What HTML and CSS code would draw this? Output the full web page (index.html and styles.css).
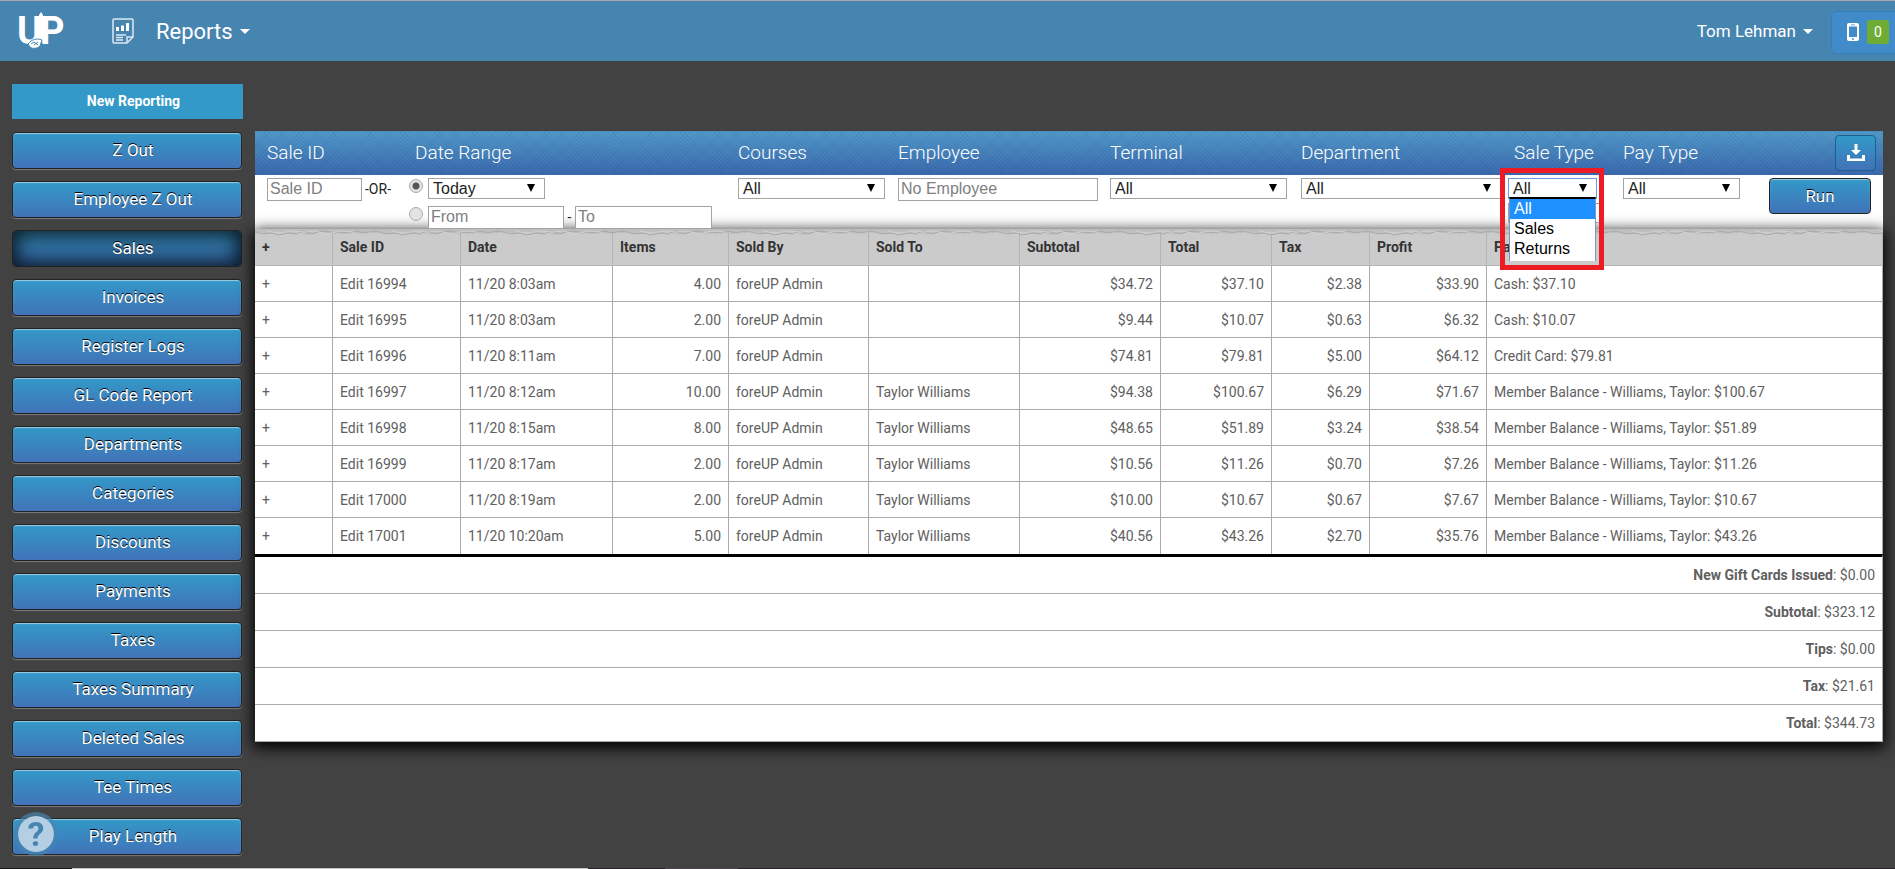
FILE: index.html
```html
<!DOCTYPE html>
<html lang="en">
<head>
<meta charset="utf-8">
<title>Reports</title>
<link rel="stylesheet" href="styles.css">
</head>
<body>
<header class="topbar">
  <a class="logo" href="#" aria-label="UP home">
    <svg width="50" height="52" viewBox="0 -6 50 52" fill="#fff">
      <text class="logo-text" x="1" y="33">U</text>
      <text class="logo-text" x="24" y="33">P</text>
      <path d="M23 4l2-3 2 3v27h-4z"/>
      <path d="M12 33c4-5 9-6 14-4l-2 6c-3 3-8 3-10 1z" stroke="#4785b1"/>
      <path d="M15 33l3-2 4 3M18 34l4-3" stroke="#4785b1" fill="none"/>
    </svg>
  </a>
  <button class="module" type="button">
    <svg width="22" height="26" viewBox="0 0 22 26" fill="none" stroke="#dbe8f1">
      <path d="M2 1h18q1 0 1 1v17l-6 6H2q-1 0-1-1V2q0-1 1-1z" stroke-width="1.500"/>
      <path d="M21 19h-6v6" stroke-width="1.500"/>
      <path d="M5.500 13V9M10.500 13V7.500M15.500 13V5" stroke="#fff" stroke-width="3"/>
      <path d="M4 17h10M4 19.500h7M4 22h7" stroke-width="1.300"/>
    </svg>
    <span>Reports</span><i class="caret"></i>
  </button>
  <button class="user" type="button">Tom Lehman<i class="caret"></i></button>
  <button class="phone" type="button" aria-label="Messages">
    <svg width="12" height="18" viewBox="0 0 12 18"><rect width="12" height="18" rx="2" fill="#fff"/><path d="M2 3.500h8v10.500H2zM4 1.500h4v.7H4z" fill="#428bca"/><circle cx="6" cy="16" r="1" fill="#428bca"/></svg>
    <span class="badge">0</span>
  </button>
</header>
<div class="page">
  <nav class="sidebar">
    <a class="new" href="#">New Reporting</a>
    <a class="item" href="#">Z Out</a>
    <a class="item" href="#">Employee Z Out</a>
    <a class="item active" href="#">Sales</a>
    <a class="item" href="#">Invoices</a>
    <a class="item" href="#">Register Logs</a>
    <a class="item" href="#">GL Code Report</a>
    <a class="item" href="#">Departments</a>
    <a class="item" href="#">Categories</a>
    <a class="item" href="#">Discounts</a>
    <a class="item" href="#">Payments</a>
    <a class="item" href="#">Taxes</a>
    <a class="item" href="#">Taxes Summary</a>
    <a class="item" href="#">Deleted Sales</a>
    <a class="item" href="#">Tee Times</a>
    <a class="item" href="#">Play Length</a>
  </nav>
  <main class="main">
    <div class="cols titles">
      <label for="sale">Sale ID</label>
      <label for="range">Date Range</label>
      <label for="course">Courses</label>
      <label for="emp">Employee</label>
      <label for="term">Terminal</label>
      <label for="dept">Department</label>
      <label class="type-title" for="type">Sale Type</label>
      <label for="pay">Pay Type</label>
      <button class="download" type="button" aria-label="Download">
        <svg width="18" height="18" viewBox="0 0 18 18" fill="#fff"><path d="M7.500 0h3v6H14l-5 5-5-5h3.500zM0 11h3v3.500h12V11h3v6H0z"/></svg>
      </button>
    </div>
    <form class="cols filters">
      <div class="field sale"><input class="box" id="sale" type="text" placeholder="Sale ID"><span>-OR-</span></div>
      <div class="dates">
        <div class="field"><input class="radio" type="radio" name="mode" aria-label="Preset range" checked><span class="pick range"><select id="range"><option>Today</option></select></span></div>
        <div class="field"><input class="radio" type="radio" name="mode" aria-label="Custom range"><input class="box date" type="text" placeholder="From" aria-label="From"><span class="dash">-</span><input class="box date" type="text" placeholder="To" aria-label="To"></div>
      </div>
      <span class="pick course"><select id="course"><option>All</option></select></span>
      <input class="box emp" id="emp" type="text" placeholder="No Employee">
      <span class="pick term"><select id="term"><option>All</option></select></span>
      <span class="pick dept"><select id="dept"><option>All</option></select></span>
      <div class="type">
        <span class="pick open"><select id="type"><option>All</option><option>Sales</option><option>Returns</option></select></span>
        <input class="box extra" type="text" aria-label="Sale type value">
        <ul class="menu"><li class="on">All</li><li>Sales</li><li>Returns</li></ul>
        <div class="mark"></div>
      </div>
      <span class="pick pay"><select id="pay"><option>All</option></select></span>
      <button class="run" type="button">Run</button>
    </form>
    <section class="report">
      <table>
        <colgroup><col class="c1"><col class="c2"><col class="c3"><col class="c4"><col class="c5"><col class="c6"><col class="c7"><col class="c8"><col class="c9"><col class="c10"><col></colgroup>
        <thead><tr><th>+</th><th>Sale ID</th><th>Date</th><th>Items</th><th>Sold By</th><th>Sold To</th><th>Subtotal</th><th>Total</th><th>Tax</th><th>Profit</th><th>Payments</th></tr></thead>
        <tbody>
          <tr><td>+</td><td>Edit 16994</td><td>11/20 8:03am</td><td class="n">4.00</td><td>foreUP Admin</td><td></td><td class="n">$34.72</td><td class="n">$37.10</td><td class="n">$2.38</td><td class="n">$33.90</td><td>Cash: $37.10</td></tr>
          <tr><td>+</td><td>Edit 16995</td><td>11/20 8:03am</td><td class="n">2.00</td><td>foreUP Admin</td><td></td><td class="n">$9.44</td><td class="n">$10.07</td><td class="n">$0.63</td><td class="n">$6.32</td><td>Cash: $10.07</td></tr>
          <tr><td>+</td><td>Edit 16996</td><td>11/20 8:11am</td><td class="n">7.00</td><td>foreUP Admin</td><td></td><td class="n">$74.81</td><td class="n">$79.81</td><td class="n">$5.00</td><td class="n">$64.12</td><td>Credit Card: $79.81</td></tr>
          <tr><td>+</td><td>Edit 16997</td><td>11/20 8:12am</td><td class="n">10.00</td><td>foreUP Admin</td><td>Taylor Williams</td><td class="n">$94.38</td><td class="n">$100.67</td><td class="n">$6.29</td><td class="n">$71.67</td><td>Member Balance - Williams, Taylor: $100.67</td></tr>
          <tr><td>+</td><td>Edit 16998</td><td>11/20 8:15am</td><td class="n">8.00</td><td>foreUP Admin</td><td>Taylor Williams</td><td class="n">$48.65</td><td class="n">$51.89</td><td class="n">$3.24</td><td class="n">$38.54</td><td>Member Balance - Williams, Taylor: $51.89</td></tr>
          <tr><td>+</td><td>Edit 16999</td><td>11/20 8:17am</td><td class="n">2.00</td><td>foreUP Admin</td><td>Taylor Williams</td><td class="n">$10.56</td><td class="n">$11.26</td><td class="n">$0.70</td><td class="n">$7.26</td><td>Member Balance - Williams, Taylor: $11.26</td></tr>
          <tr><td>+</td><td>Edit 17000</td><td>11/20 8:19am</td><td class="n">2.00</td><td>foreUP Admin</td><td>Taylor Williams</td><td class="n">$10.00</td><td class="n">$10.67</td><td class="n">$0.67</td><td class="n">$7.67</td><td>Member Balance - Williams, Taylor: $10.67</td></tr>
          <tr><td>+</td><td>Edit 17001</td><td>11/20 10:20am</td><td class="n">5.00</td><td>foreUP Admin</td><td>Taylor Williams</td><td class="n">$40.56</td><td class="n">$43.26</td><td class="n">$2.70</td><td class="n">$35.76</td><td>Member Balance - Williams, Taylor: $43.26</td></tr>
        </tbody>
        <tfoot>
          <tr><td colspan="11"><b>New Gift Cards Issued</b>: $0.00</td></tr>
          <tr><td colspan="11"><b>Subtotal</b>: $323.12</td></tr>
          <tr><td colspan="11"><b>Tips</b>: $0.00</td></tr>
          <tr><td colspan="11"><b>Tax</b>: $21.61</td></tr>
          <tr><td colspan="11"><b>Total</b>: $344.73</td></tr>
        </tfoot>
      </table>
      <svg class="torn" width="100%" height="8" aria-hidden="true">
        <defs><pattern id="tear" width="124" height="8" patternUnits="userSpaceOnUse">
          <path d="M0 0h124v3l-6 1-5-1-8 2-9-2-7 2-8-1-6 1-9-2-8 1-6 2-9-3-7 1-8 1-9-2-8 2-7-2-8 1z" fill="#bebebe"/>
          <path d="M0 3l8 2 9-1 7 2 9-2 8 1 7-3 9 3 6-2 8-1 9 2 6-1 8 1 7-2 9 2 8-2 6 1" fill="none" stroke="#a8a8a8"/>
          <path d="M12 2l12 2 14-2 12 1 10-1 12 3 14-3 12 1" fill="none" stroke="#d0d0d0"/>
        </pattern></defs>
        <rect width="100%" height="8" fill="url(#tear)"/>
      </svg>
    </section>
  </main>
</div>
<button class="help" type="button" aria-label="Help">?</button>
<div class="edge"></div>
</body>
</html>
```
FILE: styles.css
```css
* { box-sizing: border-box; }
body {
  margin: 0;
  height: 100vh;
  overflow: hidden;
  background: #424242;
  color: #606060;
  font: 14px/20px Roboto, sans-serif;
}
a { color: inherit; text-decoration: none; }
button { font-family: inherit; cursor: pointer; }

.topbar {
  display: flex;
  align-items: center;
  height: 61px;
  border-top: 1px solid #a8a8a8;
  background: #4785b1;
  color: #fff;
}
.logo { display: flex; margin-left: 16px; }
.logo-text { font: 700 38px Roboto, sans-serif; }
.module, .user {
  display: flex;
  align-items: center;
  padding: 0;
  border: 0;
  background: none;
  color: #fff;
}
.module { margin-left: 46px; font-size: 22px; }
.module svg { margin-right: 22px; }
.caret {
  margin-left: 7px;
  border: 5px solid transparent;
  border-top-color: #fff;
  border-bottom: 0;
}
.user { margin-left: auto; font-size: 17px; }
.phone {
  display: flex;
  align-items: center;
  gap: 8px;
  height: 43px;
  margin: 2px -7px 0 18px;
  padding: 0 12px 0 15px;
  border: 1px solid #357ebd;
  border-radius: 5px;
  background: #428bca;
  color: #fff;
}
.badge {
  width: 22px;
  border-radius: 3px;
  background: #6fac34;
  font-size: 14px;
  line-height: 24px;
}

.page { display: flex; gap: 12px; padding: 23px 12px 0; }
.sidebar {
  display: flex;
  flex: 0 0 231px;
  flex-direction: column;
  gap: 12px;
}
.new, .item {
  display: block;
  padding-left: 12px;
  color: #fff;
  text-align: center;
}
.new { margin-bottom: 1px; background: #3399c8; font-weight: 700; line-height: 35px; }
.item, .run {
  border: 1px solid #222;
  border-radius: 4px;
  background: linear-gradient(#3399c8, #4173b8);
  box-shadow: inset 0 1px 1px rgba(255,255,255,.5), 0 1px 1px rgba(255,255,255,.3);
  color: #fff;
  font-size: 17px;
  line-height: 35px;
  text-shadow: 0 -1px 0 #000;
}
.item { margin-right: 1px; }
.item.active { box-shadow: inset 0 0 18px 5px rgba(0,0,0,.75); background: linear-gradient(#3080aa, #3468a8); }

.main { flex: 1; min-width: 0; padding-top: 47px; }
.cols {
  display: grid;
  grid-template-columns: 148fr 323fr 160fr 212fr 191fr 207fr 115fr 146fr 114fr;
  padding-left: 12px;
}
.titles {
  align-items: center;
  height: 44px;
  background:
    repeating-linear-gradient(45deg, rgba(20,60,120,.08) 0 1px, transparent 1px 3px),
    repeating-linear-gradient(-45deg, rgba(20,60,120,.08) 0 1px, transparent 1px 3px),
    linear-gradient(#529bca, #3b69ad);
  box-shadow: inset 0 1px #4b8cbc;
  color: #fff;
  font-size: 19px;
  font-weight: 300;
}
.titles label { line-height: 42px; }
.type-title { padding-left: 6px; }
.download {
  display: grid;
  place-items: center;
  width: 41px;
  height: 36px;
  margin: 0 7px 0 auto;
  padding: 0;
  border: 1px solid #1c5f93;
  border-radius: 4px;
  background: linear-gradient(#3399c8, #4173b8);
}
.filters {
  align-items: start;
  height: 54px;
  padding-top: 3px;
  background: #fff;
  color: #222;
}
.filters > * { position: relative; z-index: 2; }
.field { display: flex; align-items: flex-start; }
.box, .pick select {
  height: 23px;
  padding: 0 2px 2px;
  border: 1px solid #a3a3a3;
  border-radius: 0;
  background: #fff;
  color: #222;
  font: 16px/19px "Liberation Sans", Arial, sans-serif;
}
.box::placeholder { color: #808080; opacity: 1; }
.sale .box { width: 95px; margin-right: 3px; }
.sale span { line-height: 22px; }
.dates { display: grid; gap: 7px; }
.radio {
  appearance: none;
  width: 14px;
  height: 14px;
  margin: 1px 5px 0 -6px;
  border: 1px solid #aaa;
  border-radius: 50%;
  background: #e3e3e3;
}
.radio:checked { background: radial-gradient(#555 0 3px, #e3e3e3 4px); }
.date { width: 136px; }
.date:last-child { width: 137px; }
.dash { width: 11px; line-height: 23px; text-align: center; }
.pick { position: relative; display: block; }
.pick select { display: block; appearance: none; width: 100%; height: 21px; padding: 0 4px; }
.pick::after {
  position: absolute;
  top: 6px;
  right: 10px;
  width: 8px;
  height: 8px;
  background: #000;
  clip-path: polygon(0 0, 100% 0, 50% 100%);
  content: "";
}
.range { width: 117px; }
.course { width: 147px; }
.emp { width: 200px; }
.term { width: 177px; }
.dept { width: 200px; }
.pay { width: 117px; }
.filters .type { z-index: 3; width: 89px; }
.open select { border: 1px solid #6a96dc; }
.extra { display: block; width: 92px; height: 20px; margin-top: 4px; }
.menu {
  position: absolute;
  top: 19px;
  left: 1px;
  width: 87px;
  height: 64px;
  margin: 0;
  padding: 0;
  border: 1px solid #7795c8;
  border-top: 2px solid #000;
  border-bottom: 0;
  background: #fff;
  color: #000;
  font: 16px/20px "Liberation Sans", Arial, sans-serif;
  list-style: none;
}
.menu li { padding-left: 4px; }
.menu .on { background: #1e90ff; color: #fff; }
.mark {
  position: absolute;
  top: -10px;
  left: -8px;
  width: 104px;
  height: 102px;
  border: 5px solid #ed1c24;
  pointer-events: none;
}
.run { width: 102px; height: 36px; padding: 0; line-height: 32px; }

.report { position: relative; z-index: 1; box-shadow: 0 4px 14px 2px #000; }
table {
  width: 100%;
  border-collapse: separate;
  border-spacing: 0;
  table-layout: fixed;
  background: #fff;
}
.c1 { width: 78px; } .c2 { width: 128px; } .c3 { width: 152px; }
.c4 { width: 116px; } .c5 { width: 140px; } .c6 { width: 151px; }
.c7 { width: 141px; } .c8 { width: 111px; } .c9 { width: 98px; }
.c10 { width: 117px; }
th, td {
  height: 36px;
  padding: 0 7px;
  border: solid #ababab;
  border-width: 0 1px 1px 0;
  text-align: left;
  white-space: nowrap;
}
th { height: 37px; background: #cbcbcb; border-color: #b4b4b4; color: #333; font-weight: 700; }
.n { text-align: right; }
tbody tr:last-child td { border-bottom: 0; }
tfoot td { height: 37px; text-align: right; }
tfoot tr:first-child td { height: 40px; border-top: 3px solid #000; }
.torn { position: absolute; top: 0; left: 0; display: block; }

.help {
  position: fixed;
  bottom: 13px;
  left: 14px;
  width: 44px;
  height: 44px;
  padding: 0;
  border: 4px solid rgba(71,133,177,.65);
  border-radius: 50%;
  background: #b4cfe4;
  background-clip: padding-box;
  color: #4785b1;
  font: 700 34px/36px Roboto, sans-serif;
}
.edge {
  position: fixed;
  bottom: 0;
  left: 0;
  width: 100%;
  height: 1px;
  background: linear-gradient(90deg, #181818 72px, #c4c4c4 72px 588px, #282228 588px 665px, #4b4349 665px 738px, #282228 738px);
}
```
